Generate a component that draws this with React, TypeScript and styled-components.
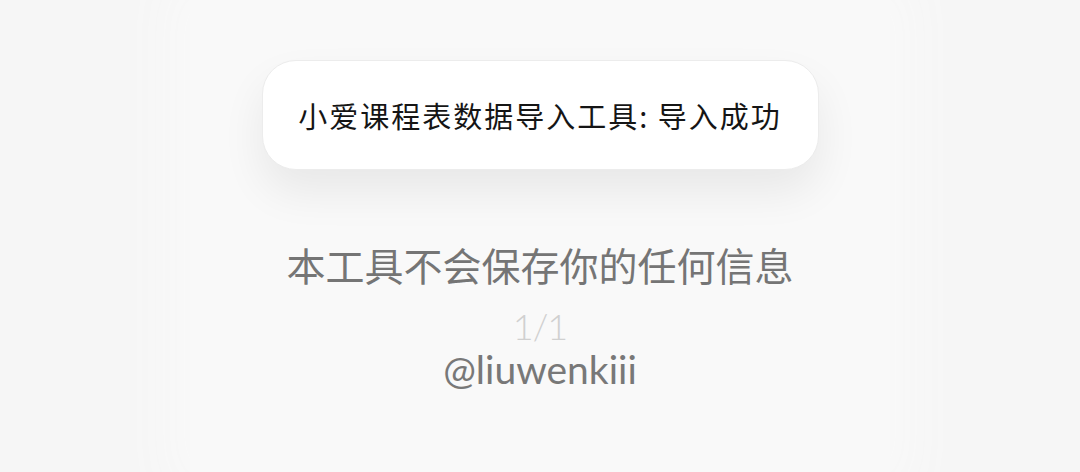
import styled, { createGlobalStyle } from "styled-components"

const GlobalStyle = createGlobalStyle`
  html, body {
    margin: 0;
    padding: 0;
    background: #f6f6f6;
  }
  body {
    font-family: "Noto Sans", "Noto Sans CJK SC", sans-serif;
  }
`

export default function App() {
  return (
    <>
      <GlobalStyle />
      <Page>
        <Backdrop>
          <Toast>小爱课程表数据导入工具:&nbsp;导入成功</Toast>
          <Notice>本工具不会保存你的任何信息</Notice>
          <PageCount>1/1</PageCount>
          <Author>@liuwenkiii</Author>
        </Backdrop>
      </Page>
    </>
  )
}

const Page = styled.div`
  width: 1080px;
  height: 472px;
  display: flex;
  justify-content: center;
  overflow: hidden;
`

const Backdrop = styled.div`
  width: 700px;
  height: 472px;
  background: #f9f9f9;
  box-shadow: 0 0 50px 20px #f9f9f9;
  display: flex;
  flex-direction: column;
  align-items: center;
  padding-top: 60px;
  box-sizing: border-box;
`

const Toast = styled.div`
  width: 557px;
  height: 110px;
  flex-shrink: 0;
  box-sizing: border-box;
  border-radius: 34px;
  background: #fff;
  border: 1px solid #ececec;
  box-shadow: 0 22px 44px rgba(0, 0, 0, 0.07);
  display: flex;
  align-items: center;
  justify-content: center;
  font-family: "Noto Sans CJK SC", sans-serif;
  font-size: 29px;
  letter-spacing: 2px;
  color: #151515;
`

const Notice = styled.div`
  margin-top: 70px;
  font-family: "Noto Sans CJK SC", sans-serif;
  font-size: 39px;
  line-height: 48px;
  color: #757575;
`

const PageCount = styled.div`
  margin-top: 20px;
  font-family: Lato, "Noto Sans", sans-serif;
  font-weight: 300;
  font-size: 36px;
  line-height: 36px;
  letter-spacing: -1px;
  color: #d0d0d0;
`

const Author = styled.div`
  margin-top: 4px;
  font-family: Lato, "Noto Sans", sans-serif;
  font-weight: 400;
  font-size: 39px;
  line-height: 42px;
  color: #787878;
`
